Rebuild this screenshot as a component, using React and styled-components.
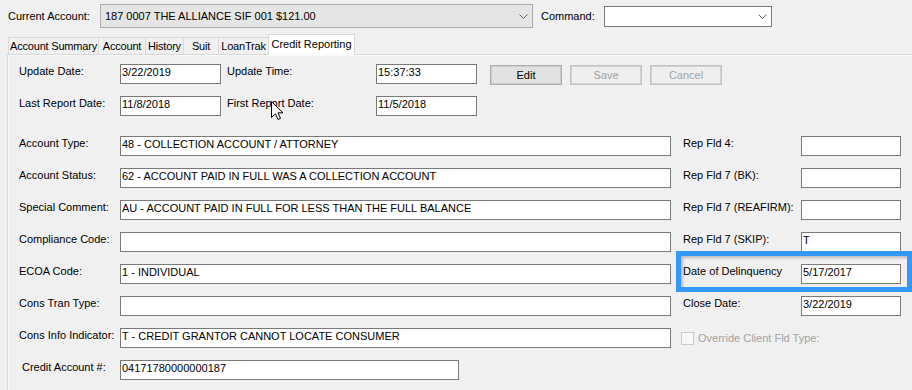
import React from 'react'
import styled, { createGlobalStyle, css } from 'styled-components'

const GlobalStyle = createGlobalStyle`
  html, body {
    margin: 0;
    padding: 0;
    background: #f0f0f0;
  }
  body {
    font-family: "Liberation Sans", Arial, sans-serif;
    font-size: 11px;
    color: #000;
  }
`

const Window = styled.div`
  position: relative;
  width: 912px;
  height: 390px;
  overflow: hidden;
  background: #f0f0f0;
`

const Header = styled.div`
  display: flex;
  align-items: center;
  height: 24px;
  padding: 4px 0 0 8px;
`

const HeaderLabel = styled.span`
  margin-right: ${p => p.$gap}px;
  line-height: 14px;
  white-space: nowrap;
`

const Combo = styled.div`
  box-sizing: border-box;
  display: flex;
  align-items: center;
  justify-content: space-between;
  width: ${p => p.$w}px;
  height: ${p => p.$h}px;
  margin-right: ${p => p.$mr || 0}px;
  padding: 0 4px 0 4px;
  border: 1px solid #7a7a7a;
  background: #fff;
  white-space: nowrap;

  ${p => p.$readOnly && css`
    border-color: #adadad;
    background: #e5e5e5;
  `}
`

const Chevron = () => (
  <svg width="9" height="5" viewBox="0 0 9 5">
    <polyline points="0.5,0.5 4.5,4.5 8.5,0.5" fill="none" stroke="#606060" strokeWidth="1" />
  </svg>
)

const TabStrip = styled.div`
  display: flex;
  align-items: flex-end;
  height: 20px;
  margin-top: 6px;
  padding-left: 8px;
`

const Tab = styled.div`
  box-sizing: border-box;
  display: flex;
  align-items: center;
  justify-content: center;
  width: ${p => p.$w}px;
  height: 17px;
  margin-right: -1px;
  border: 1px solid #d9d9d9;
  border-bottom: none;
  white-space: nowrap;
  letter-spacing: -0.2px;

  ${p => p.$active && css`
    position: relative;
    z-index: 1;
    height: 21px;
    margin-bottom: -1px;
    padding-bottom: 2px;
    background: #fff;
    letter-spacing: 0;
  `}
`

const Panel = styled.div`
  height: 400px;
  margin-left: 7px;
  padding: 9px 0 0 11px;
  border-top: 1px solid #d9d9d9;
  border-left: 1px solid #d9d9d9;
  box-shadow: inset 1px 1px 0 #fafafa;
`

const TopGrid = styled.div`
  display: grid;
  grid-template-columns: 101px 107px 149px 114px 1fr;
  grid-auto-rows: 20px;
  row-gap: 12px;
`

const FormGrid = styled.div`
  display: grid;
  grid-template-columns: 101px 563px 118px 100px;
  grid-auto-rows: 20px;
  row-gap: 12px;
  margin-top: 20px;
`

const Label = styled.div`
  padding-left: ${p => p.$indent || 0}px;
  line-height: 14px;
  white-space: nowrap;
`

const Field = styled.div`
  box-sizing: border-box;
  width: ${p => p.$w}px;
  height: 20px;
  padding: 0 1px;
  border: 1px solid #7a7a7a;
  background: #fff;
  line-height: 15px;
  white-space: nowrap;
  overflow: hidden;
`

const Buttons = styled.div`
  display: flex;
  gap: 8px;
  margin-top: 1px;
`

const Button = styled.button`
  box-sizing: border-box;
  width: 72px;
  height: 20px;
  padding: 0;
  border: 1px solid #adadad;
  box-shadow: inset 0 0 0 1px #cdcdcd;
  background: #e1e1e1;
  font: inherit;
  color: #000;

  &:disabled {
    border-color: #c4c4c4;
    box-shadow: inset 0 0 0 1px #d2d2d2;
    background: #efefef;
    color: #a3a3a3;
  }
`

const CheckRow = styled.div`
  grid-column: 3 / span 2;
  display: flex;
  align-items: center;
  gap: 4px;
  margin-left: -2px;
  color: #a3a3a3;
  white-space: nowrap;
`

const CheckBox = styled.span`
  box-sizing: border-box;
  width: 13px;
  height: 13px;
  border: 1px solid #cccccc;
  background: #f7f7f7;
`

const Highlight = styled.div`
  position: absolute;
  left: 676px;
  top: 251px;
  box-sizing: border-box;
  width: 236px;
  height: 41px;
  border: 5px solid #3399ff;
  box-shadow: inset 2px 2px 3px rgba(0, 0, 0, 0.22);
  pointer-events: none;
`

const Cursor = styled.svg`
  position: absolute;
  left: 271px;
  top: 101px;
`

const tabs = [
  { label: 'Account Summary', w: 91 },
  { label: 'Account', w: 48 },
  { label: 'History', w: 39 },
  { label: 'Suit', w: 36 },
  { label: 'LoanTrak', w: 51 },
  { label: 'Credit Reporting', w: 87, active: true },
]

const rows = [
  { label: 'Account Type:', value: '48 - COLLECTION ACCOUNT / ATTORNEY', rLabel: 'Rep Fld 4:', rValue: '' },
  { label: 'Account Status:', value: '62 - ACCOUNT PAID IN FULL WAS A COLLECTION ACCOUNT', rLabel: 'Rep Fld 7 (BK):', rValue: '' },
  { label: 'Special Comment:', value: 'AU - ACCOUNT PAID IN FULL FOR LESS THAN THE FULL BALANCE', rLabel: 'Rep Fld 7 (REAFIRM):', rValue: '' },
  { label: 'Compliance Code:', value: '', rLabel: 'Rep Fld 7 (SKIP):', rValue: 'T' },
  { label: 'ECOA Code:', value: '1 - INDIVIDUAL', rLabel: 'Date of Delinquency', rValue: '5/17/2017' },
  { label: 'Cons Tran Type:', value: '', rLabel: 'Close Date:', rValue: '3/22/2019' },
]

export default function App() {
  return (
    <Window>
      <GlobalStyle />
      <Header>
        <HeaderLabel $gap={10}>Current Account:</HeaderLabel>
        <Combo $w={433} $h={24} $mr={8} $readOnly>
          <span>187 0007 THE ALLIANCE SIF 001 $121.00</span>
          <Chevron />
        </Combo>
        <HeaderLabel $gap={9}>Command:</HeaderLabel>
        <Combo $w={168} $h={21}>
          <span />
          <Chevron />
        </Combo>
      </Header>

      <TabStrip>
        {tabs.map(t => (
          <Tab key={t.label} $w={t.w} $active={t.active}>{t.label}</Tab>
        ))}
      </TabStrip>

      <Panel>
        <TopGrid>
          <Label>Update Date:</Label>
          <Field $w={101}>3/22/2019</Field>
          <Label>Update Time:</Label>
          <Field $w={101}>15:37:33</Field>
          <Buttons>
            <Button>Edit</Button>
            <Button disabled>Save</Button>
            <Button disabled>Cancel</Button>
          </Buttons>

          <Label>Last Report Date:</Label>
          <Field $w={101}>11/8/2018</Field>
          <Label>First Report Date:</Label>
          <Field $w={101}>11/5/2018</Field>
        </TopGrid>

        <FormGrid>
          {rows.map(r => (
            <React.Fragment key={r.label}>
              <Label>{r.label}</Label>
              <Field $w={551}>{r.value}</Field>
              <Label>{r.rLabel}</Label>
              <Field $w={100}>{r.rValue}</Field>
            </React.Fragment>
          ))}

          <Label>Cons Info Indicator:</Label>
          <Field $w={551}>T - CREDIT GRANTOR CANNOT LOCATE CONSUMER</Field>
          <CheckRow>
            <CheckBox />
            <span>Override Client Fld Type:</span>
          </CheckRow>

          <Label $indent={3}>Credit Account #:</Label>
          <Field $w={339}>04171780000000187</Field>
        </FormGrid>
      </Panel>

      <Highlight />
      <Cursor width="13" height="20" viewBox="0 0 13 20">
        <path
          d="M0.5 0.5 L0.5 16.5 L4.5 12.8 L7 18.5 L9.5 17.4 L7 11.8 L12 11.8 Z"
          fill="#fff"
          stroke="#000"
          strokeWidth="1"
          strokeLinejoin="miter"
        />
      </Cursor>
    </Window>
  )
}
